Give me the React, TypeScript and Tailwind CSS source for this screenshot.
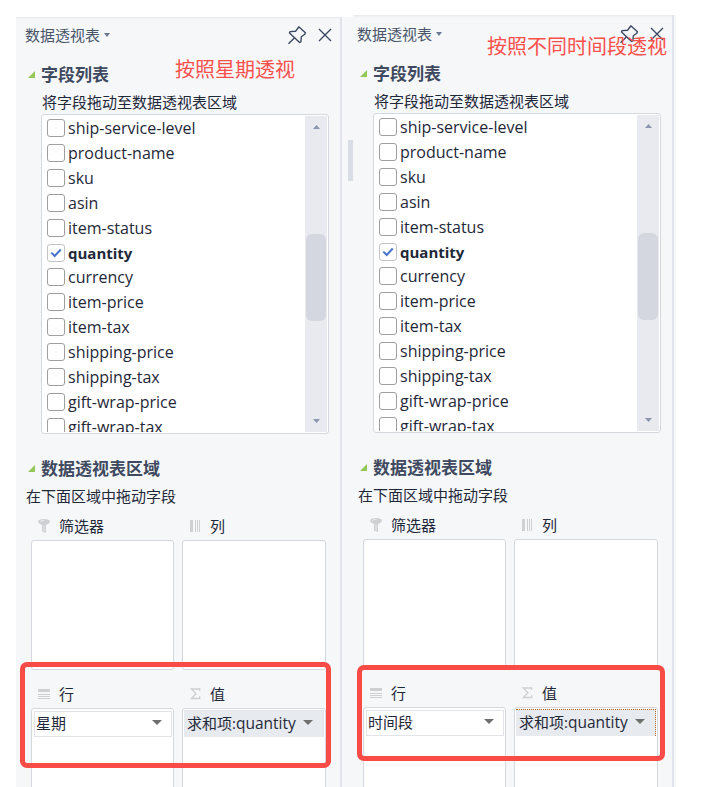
import type { ReactNode } from 'react'

const FIELDS = [
  'ship-service-level',
  'product-name',
  'sku',
  'asin',
  'item-status',
  'quantity',
  'currency',
  'item-price',
  'item-tax',
  'shipping-price',
  'shipping-tax',
  'gift-wrap-price',
  'gift-wrap-tax',
]

function Caret({ className }: { className: string }) {
  return (
    <svg viewBox="0 0 10 5" preserveAspectRatio="none" className={className} fill="currentColor">
      <path d="M0 0h10L5 5z" />
    </svg>
  )
}

function PinIcon() {
  return (
    <svg width="20" height="20" viewBox="0 0 20 20" fill="none" stroke="#3d4963" strokeWidth="1.4" strokeLinejoin="round">
      <path d="M11.800 1.800 18.400 7.800 17.800 9.200 14.300 11.700 13.900 16.800 12.600 17.500 2.500 7.900 3.100 6.600 8.700 6.200 11 3z" />
      <path d="M7.600 12.700 1.500 18.700" />
    </svg>
  )
}

function CloseIcon() {
  return (
    <svg width="14" height="14" viewBox="0 0 14 14" fill="none" stroke="#3d4963" strokeWidth="1.4">
      <path d="M1 1 13 13M13 1 1 13" />
    </svg>
  )
}

function FilterIcon() {
  return (
    <svg width="12" height="14" viewBox="0 0 12 14" fill="#cfd0d3">
      <path d="M0 2.5C0 1 2.5 0 6 0s6 1 6 2.5C12 4 10 5.300 8 6v8L4 12.500V6C2 5.300 0 4 0 2.500z" />
      <path d="M2 2.800C3 1.700 5 1.300 6.500 1.300M6 6.500v6" stroke="#f0f1f3" strokeWidth="0.8" fill="none" />
    </svg>
  )
}

function ColumnsIcon() {
  return (
    <svg width="12" height="12" viewBox="0 0 12 12" fill="#cfd0d3" shapeRendering="crispEdges">
      <path d="M1 0h3v12H1zM6 0h1v12H6zM8 0h1v12H8zM10 0h1v12H10z" />
    </svg>
  )
}

function RowsIcon() {
  return (
    <svg width="12" height="11" viewBox="0 0 12 11" fill="#cfd0d3" shapeRendering="crispEdges">
      <path d="M0 0h12v3H0zM0 5h12v1H0zM0 7h12v1H0zM0 9h12v1H0z" />
    </svg>
  )
}

function SigmaIcon() {
  return (
    <svg width="12" height="12" viewBox="0 0 12 12" fill="none" stroke="#cfd0d3" strokeWidth="1.3">
      <path d="M10.700 3V1H2.300L7 5.700 2.300 10.500H10.700V8.300" />
    </svg>
  )
}

function SectionTitle({ children }: { children: ReactNode }) {
  return (
    <>
      <svg width="7" height="7" viewBox="0 0 7 7" className="mr-[6px] ml-[12px] shrink-0" fill="#92c857">
        <path d="M7 0v7H0z" />
      </svg>
      <h2 className="text-[17px] leading-none font-bold text-[#3f4a60]">{children}</h2>
    </>
  )
}

function FieldList() {
  return (
    <div className="mt-[5px] ml-[25px] flex h-[320px] w-[288px] shrink-0 rounded-[3px] border border-[#d5d8df] bg-white py-px pr-px">
      <ul className="flex flex-1 flex-col overflow-hidden pl-[5px]">
        {FIELDS.map((name) => {
          const checked = name === 'quantity'
          return (
            <li key={name} className={checked ? 'flex h-[24px] shrink-0 items-start' : 'flex h-[25px] shrink-0 items-start'}>
              <span
                className={
                  checked
                    ? 'mt-[3px] flex size-[18px] items-center justify-center rounded-[3px] border border-[#c4c4c4] bg-white'
                    : 'mt-[3px] flex size-[18px] rounded-[3px] border border-[#9f9f9f] bg-white'
                }
              >
                {checked && (
                  <svg width="12" height="10" viewBox="0 0 12 10" fill="none" stroke="#4874cb" strokeWidth="2">
                    <path d="M1.300 4.600 4.700 8 10.800 1.500" />
                  </svg>
                )}
              </span>
              <span
                className={checked ? 'ml-[3px] text-[15px] leading-[24px] font-bold' : 'ml-[3px] text-[16px] leading-[24px]'}
              >
                {name}
              </span>
            </li>
          )
        })}
      </ul>
      <div className="flex w-[22px] flex-col items-center bg-[#e9eaef] text-[#8b96ae]">
        <Caret className="mt-[9px] h-[4px] w-[7px] rotate-180" />
        <div className="mt-[105px] h-[87px] w-[20px] rounded-[6px] bg-[#d4d7df]" />
        <Caret className="mt-[98px] h-[4px] w-[7px]" />
      </div>
    </div>
  )
}

function ZoneLabel({ icon, children }: { icon: ReactNode; children: ReactNode }) {
  return (
    <div className="flex h-[28px] items-center gap-[9px] pl-[7px] text-[15px]">
      <span className="flex w-[12px]">{icon}</span>
      <span>{children}</span>
    </div>
  )
}

function Panel({ rowField, focused }: { rowField: string; focused?: boolean }) {
  return (
    <div className="flex w-[324px] shrink-0 flex-col">
      <header className="flex h-[36px] shrink-0 items-center pl-[9px] text-[#4a556b]">
        <span className="text-[15px]">数据透视表</span>
        <Caret className="ml-[4px] h-[4px] w-[6px] text-[#6b7890]" />
        <span className="ml-auto flex items-center gap-[11px] pr-[8px]">
          <PinIcon />
          <CloseIcon />
        </span>
      </header>
      <div className="flex h-[42px] shrink-0 items-center">
        <SectionTitle>字段列表</SectionTitle>
      </div>
      <p className="h-[14px] shrink-0 pl-[26px] text-[15px] leading-[14px]">将字段拖动至数据透视表区域</p>
      <FieldList />
      <div className="mt-[16px] flex h-[36px] shrink-0 items-center">
        <SectionTitle>数据透视表区域</SectionTitle>
      </div>
      <p className="h-[20px] shrink-0 pl-[10px] text-[15px] leading-[20px]">在下面区域中拖动字段</p>
      <div className="mt-[6px] grid shrink-0 grid-cols-[143px_144px] gap-x-[8px] pl-[15px]">
        <ZoneLabel icon={<FilterIcon />}>筛选器</ZoneLabel>
        <ZoneLabel icon={<ColumnsIcon />}>列</ZoneLabel>
        <div className="h-[130px] rounded-[3px] border border-[#d5d8df] bg-white" />
        <div className="h-[130px] rounded-[3px] border border-[#d5d8df] bg-white" />
      </div>
      <div className="mt-[10px] grid shrink-0 grid-cols-[143px_144px] gap-x-[8px] pl-[15px]">
        <ZoneLabel icon={<RowsIcon />}>行</ZoneLabel>
        <ZoneLabel icon={<SigmaIcon />}>值</ZoneLabel>
        <div className="h-[100px] rounded-[3px] border border-[#d5d8df] bg-white px-px pt-[2px]">
          <div className="ml-px flex h-[26px] items-center justify-between border border-[#e2e4e9] pr-[9px] pl-px text-[15px]">
            <span className="-mt-[2px]">{rowField}</span>
            <Caret className="-mt-[4px] h-[5px] w-[10px] text-[#6f6f6f]" />
          </div>
        </div>
        <div className="h-[100px] rounded-[3px] border border-[#d5d8df] bg-white px-px pt-px">
          <div
            className={
              focused
                ? 'flex h-[27px] items-center justify-between border-t border-r border-dotted border-[#b8651b] bg-[#e7eaef] pr-[10px] pl-[3px] text-[15px]'
                : 'flex h-[27px] items-center justify-between border-t border-r border-[#dfe2e8] bg-[#e7eaef] pr-[10px] pl-[3px] text-[15px]'
            }
          >
            <span className="whitespace-nowrap">
              求和项:<span className="text-[15.500px]">quantity</span>
            </span>
            <Caret className="-mt-[4px] h-[5px] w-[10px] text-[#6f6f6f]" />
          </div>
        </div>
      </div>
    </div>
  )
}

export default function App() {
  return (
    <main className="relative flex h-[787px] w-[706px] overflow-hidden bg-white pl-[16px] font-['Open_Sans','Noto_Sans_CJK_SC',sans-serif] text-[#1f2839]">
      <section className="mt-[17px] w-[326px] shrink-0 overflow-hidden border-r-2 border-[#e2e4ec] bg-[#f5f7f9] shadow-[inset_0_2px_2px_-1px_#e5e7ea]">
        <Panel rowField="星期" />
      </section>
      <div className="mt-[17px] w-[11px] shrink-0 bg-[#f5f7f9] pt-[123px]">
        <div className="ml-[6px] h-[41px] w-[5px] rounded-l-[1px] bg-[#d9dee4]" />
      </div>
      <section className="mt-[15px] w-[321px] shrink-0 border-r-2 border-[#e2e4ec] bg-[#f5f7f9] pt-px shadow-[inset_0_2px_2px_-1px_#e5e7ea]">
        <div className="-ml-[5px]">
          <Panel rowField="时间段" focused />
        </div>
      </section>
      <div className="mt-[15px] w-[2px] shrink-0 bg-[#f7f8fa]" />

      <span className="absolute top-[55px] left-[175px] text-[20px] leading-[30px] whitespace-nowrap text-[#fb4f4c]">按照星期透视</span>
      <span className="absolute top-[32px] left-[487px] text-[20px] leading-[30px] whitespace-nowrap text-[#fb4f4c]">按照不同时间段透视</span>
      <div className="absolute top-[662px] left-[20px] h-[106px] w-[311px] rounded-[7px] border-[5px] border-[#fa4c47]" />
      <div className="absolute top-[665px] left-[357px] h-[96px] w-[308px] rounded-[7px] border-[5px] border-[#fa4c47]" />
    </main>
  )
}
